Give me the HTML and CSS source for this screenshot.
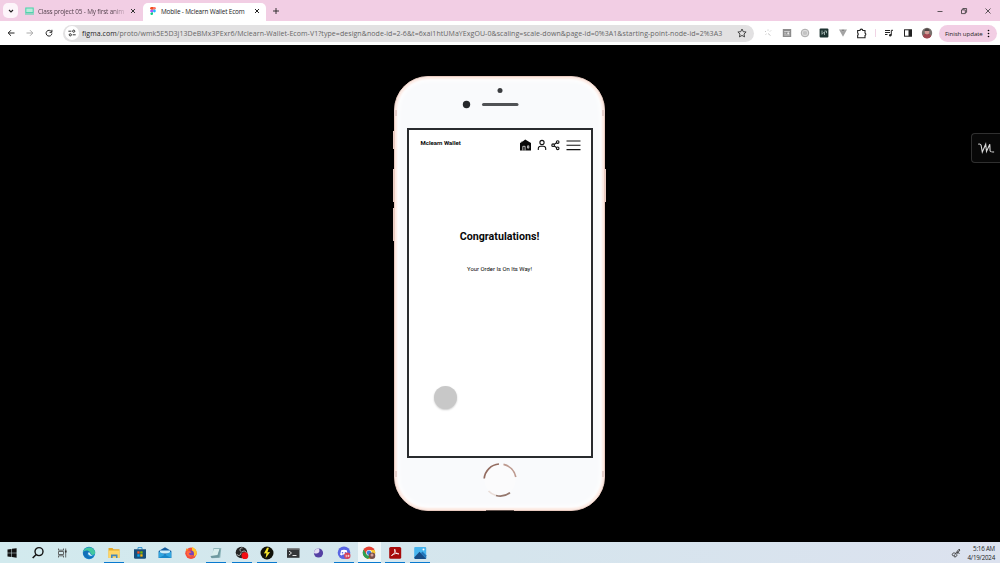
FILE: index.html
```
<!DOCTYPE html>
<html lang="en">
<head>
    <meta charset="UTF-8">
    <meta name="viewport" content="width=device-width, initial-scale=1.0">
    <title>Mobile - Mclearn Wallet Ecom</title>
    <link rel="stylesheet" href="styles.css">
</head>
<body>
    <div class="tabs">
        <div class="tab-search">
            <svg width="6" height="6" viewBox="0 0 6 6"><path d="M1 2l2 2 2-2" fill="none" stroke="#222" stroke-width="1.1"/></svg>
        </div>
        <div class="tab tab-first">
            <svg width="9" height="8" viewBox="0 0 9 8"><rect x=".8" y="1" width="7.4" height="4.6" fill="#b9eadb" stroke="#45d3a8" stroke-width="1"/><path d="M0 7h9" stroke="#45d3a8"/></svg>
            <span class="tab-title">Class project 05 - My first anim</span>
            <svg class="close" width="6" height="6" viewBox="0 0 6 6"><path d="M1 1l4 4M5 1L1 5" stroke="#333"/></svg>
        </div>
        <div class="tab tab-active">
            <svg width="6" height="8" viewBox="0 0 6 8">
                <path d="M3 0H1.5a1.35 1.35 0 0 0 0 2.7H3z" fill="#f24e1e"/>
                <path d="M3 0h1.5a1.35 1.35 0 0 1 0 2.7H3z" fill="#ff7262"/>
                <path d="M3 2.7H1.5a1.35 1.35 0 0 0 0 2.7H3z" fill="#a259ff"/>
                <circle cx="4.4" cy="4" r="1.4" fill="#1abcfe"/>
                <path d="M3 5.4H1.5A1.3 1.3 0 1 0 3 6.7z" fill="#0acf83"/>
            </svg>
            <span class="tab-title">Mobile - Mclearn Wallet Ecom</span>
            <svg class="close" width="6" height="6" viewBox="0 0 6 6"><path d="M1 1l4 4M5 1L1 5" stroke="#222"/></svg>
        </div>
        <svg class="new-tab" width="6" height="6" viewBox="0 0 6 6"><path d="M3 0v6M0 3h6" stroke="#222" stroke-width=".9"/></svg>
        <div class="window-buttons">
            <svg width="8" height="8" viewBox="0 0 8 8"><path d="M1.5 4.5h5" stroke="#333" stroke-width=".8"/></svg>
            <svg width="8" height="8" viewBox="0 0 8 8"><path d="M1.5 2.9h3.8v3.7H1.5zM2.8 2.9V1.5h3.8v3.8H5.3" fill="none" stroke="#333" stroke-width=".8"/></svg>
            <svg width="8" height="8" viewBox="0 0 8 8"><path d="M1.5 1.5l5 5M6.5 1.5l-5 5" stroke="#333" stroke-width=".8"/></svg>
        </div>
    </div>

    <div class="toolbar">
        <div class="nav">
            <svg width="8" height="8" viewBox="0 0 8 8"><path d="M7.5 4H1.2M4 1.2L1.2 4 4 6.8" fill="none" stroke="#222"/></svg>
            <svg width="8" height="8" viewBox="0 0 8 8"><path d="M.5 4h6.3M4 1.2L6.8 4 4 6.8" fill="none" stroke="#aaa"/></svg>
            <svg width="8" height="8" viewBox="0 0 8 8"><path d="M6.5 2.7A2.9 2.9 0 1 0 6.9 4.5M6.9.8v2.5H4.5" fill="none" stroke="#222"/></svg>
        </div>
        <div class="address">
            <div class="site-info">
                <svg width="8" height="8" viewBox="0 0 8 8"><path d="M.4 2.2h3M4.7 5.8h3" stroke="#333"/><circle cx="5.7" cy="2.2" r="1.1" fill="none" stroke="#333"/><circle cx="2.3" cy="5.8" r="1.1" fill="none" stroke="#333"/></svg>
            </div>
            <div class="url"><b>figma.com</b>/proto/wmk5E5D3j13DeBMx3PExr6/Mclearn-Wallet-Ecom-V1?type=design&amp;node-id=2-6&amp;t=6xai1htUMaYExgOU-0&amp;scaling=scale-down&amp;page-id=0%3A1&amp;starting-point-node-id=2%3A3</div>
            <svg class="star" width="10" height="10" viewBox="0 0 9 9"><path d="M4.5.9l1.1 2.4 2.6.3-1.9 1.800.5 2.600-2.300-1.300L2.200 8l.5-2.600L.8 3.600l2.600-.3z" fill="none" stroke="#333" stroke-width=".8"/></svg>
        </div>
        <div class="extensions">
            <svg width="10" height="10" viewBox="0 0 10 10"><path d="M2 3l1 1M5 1.5v1.2M8 2.5l-1 1M2.5 6.5l1-.6M5 5.5l2.500 2" stroke="#c8c8c8" stroke-width="1"/></svg>
            <svg width="10" height="10" viewBox="0 0 10 10"><rect x=".8" y="1" width="8.4" height="8" fill="#8c8c8c"/><path d="M2.2 3.5h5.6M2.2 5.2h2M2.2 7h5.6" stroke="#ddd" stroke-width=".8"/><circle cx="6.3" cy="5.3" r="1.1" fill="#eee"/></svg>
            <svg width="10" height="10" viewBox="0 0 10 10"><circle cx="5" cy="5" r="3.800" fill="#ddd" stroke="#aaa" stroke-width="1"/><path d="M3.8 3.5v3M5 3v4M6.2 3.500v3" stroke="#aaa" stroke-width=".7"/></svg>
            <svg width="10" height="10" viewBox="0 0 10 10"><rect x=".6" y=".6" width="8.8" height="8.8" rx="1" fill="#1d3431"/><path d="M3 2.500v3.800l2.500-2.500V7M5.500 3h2v2.200" stroke="#b7c9c4" fill="none" stroke-width=".8"/></svg>
            <svg width="10" height="10" viewBox="0 0 10 10"><path d="M1 1.5h2.400L5 4l1.600-2.500H9L5 8.800z" fill="#a3a3a3"/><path d="M3.4 1.500L5 4l1.600-2.500" fill="#777"/></svg>
            <svg width="11" height="11" viewBox="0 0 10 10"><path d="M1.5 2.300h2.100a1.300 1.300 0 0 1 2.600 0h2v2.300a1.200 1.200 0 0 1 0 2.200v2H1.500V6.600a1.200 1.200 0 0 0 0-2z" fill="none" stroke="#222" stroke-width="1"/></svg>
            <span class="divider"></span>
            <svg width="10" height="10" viewBox="0 0 10 10"><path d="M1 2.500h5M1 4.500h5M1 6.500h2.500M7.300 7.300v-5H9" fill="none" stroke="#222"/><circle cx="6.2" cy="7.3" r="1.2" fill="#222"/></svg>
            <svg width="10" height="10" viewBox="0 0 10 10"><rect x="1.500" y="1.8" width="7" height="6.4" fill="none" stroke="#222"/><path d="M5.5 1.800h3v6.400h-3z" fill="#222"/></svg>
            <svg width="12" height="12" viewBox="0 0 12 12"><circle cx="6" cy="6" r="5.2" fill="#77716d"/><path d="M2 9.500a4 3 0 0 1 8 0 5.200 5.200 0 0 1-8 0z" fill="#a04750"/><circle cx="6" cy="5" r="2.4" fill="#d29a93"/><path d="M3.5 4a2.500 2.500 0 0 1 5 0z" fill="#4d4545"/></svg>
        </div>
        <div class="update">
            <span>Finish update</span>
            <svg width="3" height="9" viewBox="0 0 3 9"><circle cx="1.5" cy="1.5" r=".8"/><circle cx="1.5" cy="4.5" r=".8"/><circle cx="1.5" cy="7.5" r=".8"/></svg>
        </div>
    </div>

    <div class="stage">
        <div class="phone">
            <i class="side side-mute"></i>
            <i class="side side-up"></i>
            <i class="side side-down"></i>
            <i class="side side-power"></i>
            <i class="band band-tl"></i>
            <i class="band band-tr"></i>
            <i class="band band-bl"></i>
            <i class="band band-br"></i>
            <i class="port"></i>
            <div class="phone-top">
                <svg width="60" height="24" viewBox="0 0 60 24"><circle cx="41" cy="4.5" r="2.5" fill="#3b3d40"/><circle cx="7.5" cy="18.5" r="3.7" fill="#26282b"/><rect x="23" y="17" width="36.5" height="3" rx="1.5" fill="#505255"/></svg>
            </div>
            <div class="screen">
                <div class="app-bar">
                    <div class="brand">Mclearn Wallet</div>
                    <div class="app-icons">
                        <svg width="11" height="12" viewBox="0 0 11 12"><path d="M0 11.500V4L1.500 3.300V2.500h1.200L5.200.5 11 4v7.500z" fill="#080808"/><path d="M2.800 11.500V7.300h2.300v4.200M7.600 6.800h1.200v2.300H7.600z" fill="none" stroke="#fff" stroke-width=".7"/></svg>
                        <svg width="10" height="12" viewBox="0 0 10 12"><circle cx="5" cy="3.5" r="2.100" fill="none" stroke="#111" stroke-width="1.1"/><path d="M1.300 11V9.500A2.300 2.300 0 0 1 3.600 7.300h2.800a2.300 2.300 0 0 1 2.300 2.200V11" fill="none" stroke="#111" stroke-width="1.1"/></svg>
                        <svg width="9" height="12" viewBox="0 0 9 12"><path d="M6.500 3L2.100 6.200l4.400 3.100" fill="none" stroke="#111" stroke-width="1.1"/><circle cx="6.7" cy="3.1" r="1.3" fill="#fff" stroke="#111" stroke-width="1.1"/><circle cx="2.1" cy="6.2" r="1.3" fill="#fff" stroke="#111" stroke-width="1.1"/><circle cx="6.7" cy="9.3" r="1.3" fill="#fff" stroke="#111" stroke-width="1.1"/></svg>
                        <svg width="15" height="12" viewBox="0 0 15 12"><path d="M.5 2h14M.5 6.300h14M.5 10.600h14" stroke="#111" stroke-width="1.1"/></svg>
                    </div>
                </div>
                <h1>Congratulations!</h1>
                <p>Your Order Is On Its Way!</p>
                <i class="cursor"></i>
            </div>
            <svg class="home" width="36" height="36" viewBox="0 0 36 36">
                <circle cx="18" cy="18" r="15.5" fill="#fbfbfc"/>
                <g fill="none" stroke-width="1.7">
                    <path d="M2.200 16.500A16 16 0 0 1 17 2" stroke="#936c60"/>
                    <path d="M21.500 2.400A16 16 0 0 1 33.800 15" stroke="#bd9a8f"/>
                    <path d="M28 30.600A16 16 0 0 1 14 33.500" stroke="#94776d"/>
                    <path d="M14 33.500a16 16 0 0 1-7.500-4.500" stroke="#eaded9"/>
                </g>
            </svg>
        </div>
        <div class="side-tab">
            <svg width="18" height="12" viewBox="0 0 18 12"><path d="M1.200 2.200c1-.4 2.300-.2 2.900 1L5.300 10 8.700 2.200 9.500 9.500l3.300-7.300.3 6.800c.2 1.200 2 1 4 .9" fill="none" stroke="#d8d8d8" stroke-width="1.1"/></svg>
        </div>
    </div>

    <div class="taskbar">
        <div class="task"><svg width="14" height="14" viewBox="0 0 14 14"><path d="M2.500 3.500l4-.6v3.800h-4zM7 2.800l4.600-.6v4.500H7zM2.500 7.300h4V11l-4-.6zM7 7.300h4.600v4.400L7 11.100z" fill="#111"/></svg></div>
        <div class="task"><svg width="14" height="14" viewBox="0 0 14 14"><circle cx="8" cy="5.6" r="4" fill="none" stroke="#151515" stroke-width="1.4"/><path d="M5.200 8.500L1.700 12" stroke="#151515" stroke-width="1.6"/></svg></div>
        <div class="task"><svg width="14" height="14" viewBox="0 0 14 14"><path d="M2.500 2.500v1.700h5V2.500M2.500 5.500h5v3h-5zM2.500 11.500V9.800h5v1.700M9.700 2.500v9" fill="none" stroke="#444" stroke-width=".8"/><path d="M8.900 4.500h1.700v2H8.900z" fill="#333"/></svg></div>
        <div class="task"><svg width="14" height="14" viewBox="0 0 14 14"><circle cx="7" cy="7" r="6.2" fill="#1682cb"/><path d="M1 7a6.200 6.200 0 0 1 12.200-.8c.2 2-1.600 3-3.800 2.600C9 5 3 3.500 1 7z" fill="#43c7a0"/><path d="M1 7c1.500-3 5-3.200 7-.8-2-.5-3.500 1.300-2.500 3.300 1 1.800 3.700 2 6 .9A6.200 6.200 0 0 1 1 7z" fill="#146fb8"/><path d="M7 6.300c-1.300.4-1.200 2 .3 3 1.500 1 3.300.6 4.500.3C8 10 9 7.500 7 6.300z" fill="#e1f3f8"/></svg></div>
        <div class="task open"><svg width="14" height="14" viewBox="0 0 14 14"><path d="M1.500 2h4l1 1.200h6V12h-11z" fill="#e5a928"/><path d="M1.500 4.500h11V12h-11z" fill="#ffd667"/><path d="M4 12V8.500h6.500V12H9v-1.700H5.600V12z" fill="#4587be"/></svg></div>
        <div class="task"><svg width="14" height="14" viewBox="0 0 14 14"><path d="M5 3.500V1.600h4v1.900" fill="none" stroke="#3096d2"/><path d="M1 3.300h12v8.200a1.300 1.300 0 0 1-1.300 1.300H2.300A1.300 1.300 0 0 1 1 11.500z" fill="#174e7b"/><path d="M4.300 5.300h2.300v2.300H4.300z" fill="#f25022"/><path d="M7.300 5.300h2.300v2.300H7.300z" fill="#7fba00"/><path d="M4.300 8.300h2.300v2.300H4.300z" fill="#00a4ef"/><path d="M7.300 8.300h2.300v2.300H7.300z" fill="#ffb900"/></svg></div>
        <div class="task"><svg width="14" height="14" viewBox="0 0 14 14"><path d="M.7 5L7 1.200 13.300 5v7H.7z" fill="#145f9f"/><path d="M2 4.500h10v3H2z" fill="#cceefa"/><path d="M.7 5.400L7 8.700l6.300-3.300V12H.7z" fill="#31a5df"/><path d="M.7 12L7 8.700l6.300 3.300z" fill="#1787c9"/></svg></div>
        <div class="task"><svg width="14" height="14" viewBox="0 0 14 14"><circle cx="7" cy="7.3" r="5.7" fill="#f44c3b"/><path d="M8 1c3.500 1 5.400 4.300 4.700 7.500L9.500 11C11 8 9 6 8 4.500z" fill="#ffc42d"/><path d="M1.800 5l.7-2.700L5 4z" fill="#ff8a24"/><circle cx="7" cy="7.5" r="2.9" fill="#7544ba"/><path d="M2.500 5.500C5 4.500 7 5 7.500 6.500L5 7.300c0 2 2.500 2.500 4.400 1.500-1 2.700-5 2.600-6.500 0z" fill="#ff6842"/></svg></div>
        <div class="task open"><svg width="14" height="14" viewBox="0 0 14 14"><path d="M4.500 2h7.800l-1 9.700-8.500.5z" fill="#91b8bd"/><path d="M5 3h5.700l-2 6.500-6.800 1z" fill="#d9eeed"/><path d="M1.500 10l7-1 2-6 1 .5-1.300 8-7.800.5z" fill="#6f9aa0"/></svg></div>
        <div class="task open"><svg width="14" height="14" viewBox="0 0 14 14"><circle cx="6.5" cy="6.5" r="5.8" fill="#252525"/><path d="M6.500 6c-3-2-1-4.500 1-4M6 6.700c0 3-3 3.600-4.200 1.500M7 6c2.400-2 4.400-.5 4.300 1.500" fill="none" stroke="#c8c8c8" stroke-width=".9"/><circle cx="9.9" cy="9.7" r="3.4" fill="#f20d12"/></svg></div>
        <div class="task open"><svg width="14" height="14" viewBox="0 0 14 14"><circle cx="7" cy="7" r="6.5" fill="#101109"/><path d="M7 1.800L3.900 7.600l2.500-.3-.8 4.900 4.500-6.200-2.700.2 1.500-4.400z" fill="#f6e52c"/></svg></div>
        <div class="task"><svg width="14" height="14" viewBox="0 0 14 14"><path d="M1 2.500h12.500v9.300H1z" fill="#333638"/><path d="M1 2.500h12.500v1.200H1z" fill="#777"/><path d="M3 5l2.500 2L3 9M6.500 9.500h4" fill="none" stroke="#e5e5e5"/></svg></div>
        <div class="task"><svg width="14" height="14" viewBox="0 0 14 14"><circle cx="7.5" cy="7" r="4.6" fill="#5541a4"/><path d="M3 7a4.500 4.500 0 0 1 4.700-4.600C9 4 8.700 6.500 6.500 7.300 5 7.800 3.700 7.600 3 7z" fill="#e4ddf4"/></svg></div>
        <div class="task open"><svg width="14" height="14" viewBox="0 0 14 14"><circle cx="7" cy="6.8" r="6.3" fill="#5966e4"/><path d="M4.200 4.200Q7 3.200 9.800 4.200l1 4.500-1.700.8-.7-1H5.600l-.8 1-1.700-.8z" fill="#fff"/><circle cx="5.5" cy="6.7" r=".8" fill="#5966e4"/><circle cx="8.5" cy="6.7" r=".8" fill="#5966e4"/><circle cx="10.3" cy="9.8" r="3.2" fill="#d64359"/><path d="M8.500 9.300h1.300v1.500H8.500M11.500 8.800v2.200M10.400 9.900h2.200" fill="none" stroke="#fff" stroke-width=".6"/></svg></div>
        <div class="task open current"><svg width="14" height="14" viewBox="0 0 14 14"><circle cx="7" cy="6.7" r="6.2" fill="#e54335"/><path d="M1.600 3.600a6.200 6.200 0 0 0 4.700 9.300l2.500-4.600H4.300z" fill="#2ca252"/><path d="M7 4h5.600a6.200 6.200 0 0 1-6.300 8.900L9.300 8z" fill="#f8c92f"/><circle cx="7" cy="6.7" r="2.8" fill="#fff"/><circle cx="7" cy="6.7" r="2.2" fill="#367ce4"/><circle cx="10" cy="9.8" r="3.3" fill="#77504d"/><circle cx="10" cy="9" r="1.5" fill="#d4a09a"/></svg></div>
        <div class="task open"><svg width="14" height="14" viewBox="0 0 14 14"><rect x="1.2" y="1" width="12" height="11.8" rx="1.5" fill="#a70b0b"/><path d="M3.500 9.500C6 8.500 8 5 6.800 3.200c-1 .3.700 5 4 4.700-.6-1.300-6 0-7.300 1.600z" fill="none" stroke="#fff" stroke-width=".9"/></svg></div>
        <div class="task open"><svg width="14" height="14" viewBox="0 0 14 14"><rect x="1.2" y="1" width="12" height="12" rx="1" fill="#47b5ef"/><path d="M1.200 11.500L6.500 5.800l6.700 6.900-.8.300H2z" fill="#174c86"/><path d="M7.800 7.200L9.500 5.500l3.700 3.800v3.300z" fill="#2374b8"/><circle cx="10.5" cy="3.5" r="1" fill="#fff"/></svg></div>
        <div class="tray">
            <svg width="10" height="10" viewBox="0 0 10 10"><path d="M4.500 5.500L8 1.200l1 .8-3.500 4.200zM4.700 5.800c-1.500-1.800-3.800-.5-3.400 1.200.4 1.500 2.700 1 2.600-.6M3 8.700c1.500.6 3-.2 3-2M6 4l2.500 1.500" fill="none" stroke="#333" stroke-width=".9"/></svg>
            <div class="clock">5:16 AM<br>4/19/2024</div>
        </div>
    </div>
</body>
</html>
```

FILE: styles.css
```
* {
    box-sizing: border-box;
}

body {
    display: flex;
    flex-direction: column;
    height: 563px;
    margin: 0;
    overflow: hidden;
    background-color: #000;
    font-family: "Open Sans", "Noto Sans", sans-serif;
    color: #222;
}

svg {
    display: block;
    flex: none;
}

/* browser */
.tabs {
    display: flex;
    align-items: center;
    height: 21px;
    padding-left: 3px;
    background-color: #f2cee4;
}

.tab-search {
    display: flex;
    align-items: center;
    justify-content: center;
    width: 15px;
    height: 15px;
    border-radius: 5px;
    background-color: #fdf5fa;
}

.tab {
    display: flex;
    align-items: center;
    height: 18px;
    margin-top: 3px;
    padding-bottom: 2px;
    font-size: 6.4px;
    letter-spacing: -.16px;
}

.tab-first {
    width: 125px;
    padding-left: 7px;
    color: #55434f;
}

.tab-active {
    width: 123px;
    padding-left: 7px;
    border-radius: 5px 5px 0 0;
    background-color: #fff;
}

.tab-title {
    width: 86px;
    margin-left: 5px;
    white-space: nowrap;
}

.tab-first .tab-title {
    margin-left: 4px;
    -webkit-mask-image: linear-gradient(90deg, #000 85%, rgba(0, 0, 0, .3));
    mask-image: linear-gradient(90deg, #000 85%, rgba(0, 0, 0, .3));
}

.close {
    margin-left: 7px;
}

.tab-first .close {
    margin-left: 6px;
}

.new-tab {
    margin-left: 7px;
}

.window-buttons {
    display: flex;
    gap: 16px;
    margin-left: auto;
    padding-right: 8px;
}

.toolbar {
    display: flex;
    align-items: center;
    height: 24px;
    background-color: #fff;
}

.nav {
    display: flex;
    gap: 11px;
    width: 63px;
    padding-left: 7px;
}

.address {
    display: flex;
    align-items: center;
    width: 691px;
    height: 17px;
    border-radius: 9px;
    background-color: #e2e1e2;
}

.site-info {
    display: flex;
    align-items: center;
    justify-content: center;
    width: 14px;
    height: 14px;
    margin-left: 1.5px;
    border-radius: 50%;
    background-color: #fff;
}

.url {
    width: 651px;
    margin-left: 3.5px;
    white-space: nowrap;
    font-size: 7px;
    letter-spacing: .07px;
    color: #666;
}

.url b {
    font-weight: 400;
    color: #222;
}

.star {
    margin-left: 4px;
}

.extensions {
    display: flex;
    align-items: center;
    gap: 8.7px;
    width: 185px;
    padding-left: 9px;
}

.divider {
    width: 1px;
    height: 8px;
    margin: 0 -1px;
    background-color: #f0d5e5;
}

.update {
    display: flex;
    align-items: center;
    justify-content: space-between;
    width: 58px;
    height: 17px;
    padding: 0 7px 0 6px;
    border-radius: 9px;
    background-color: #f2cee4;
    font-size: 6.1px;
    letter-spacing: -.05px;
    white-space: nowrap;
}

/* prototype */
.stage {
    position: relative;
    display: flex;
    justify-content: center;
    height: 497px;
    padding: 31px 1px 0 0;
    background-color: #000;
}

.phone {
    position: relative;
    display: flex;
    flex-direction: column;
    align-items: center;
    width: 211px;
    height: 435px;
    border: 1px solid #e9cbc1;
    border-radius: 34px;
    background-color: #f9fafc;
    box-shadow: inset 0 0 2px 2px #fce9e2, inset 0 0 5px 4px #fff;
}

.phone-top {
    width: 211px;
    height: 51px;
    padding: 9px 0 0 65px;
}

.screen {
    position: relative;
    width: 186px;
    height: 330px;
    border: 2px solid #292b2e;
    background-color: #fff;
    font-family: Roboto, sans-serif;
    text-align: center;
    color: #080808;
}

.app-bar {
    display: flex;
    justify-content: space-between;
    height: 30px;
    padding: 9px 10px 0 12px;
}

.brand {
    margin-top: -1px;
    font-size: 6px;
    font-weight: 700;
    line-height: 9px;
}

.app-icons {
    display: flex;
    gap: 6px;
}

.app-icons svg:nth-child(2) {
    margin-right: -2px;
}

h1 {
    margin: 69px 0 0;
    font-size: 10.7px;
    font-weight: 700;
    line-height: 16px;
}

p {
    margin: 19px 0 0;
    font-size: 5.9px;
    line-height: 10px;
}

.cursor {
    position: absolute;
    left: 25px;
    top: 256px;
    width: 23px;
    height: 23px;
    border-radius: 50%;
    background-color: #c8c8c8;
    box-shadow: 0 1px 2px #ccc;
}

.home {
    margin-top: 4px;
}

.side {
    position: absolute;
    left: -2px;
    width: 1px;
    background-color: #e9cdc4;
}

.side-mute {
    top: 54px;
    height: 18px;
}

.side-up {
    top: 92px;
    height: 33px;
}

.side-down {
    top: 131px;
    height: 33px;
}

.side-power {
    left: auto;
    right: -2px;
    top: 92px;
    height: 33px;
}

.band {
    position: absolute;
    width: 3px;
    height: 6px;
    background-color: #e6cfca;
}

.band-tl,
.band-tr {
    top: 33px;
}

.band-bl,
.band-br {
    bottom: 33px;
}

.band-tl,
.band-bl {
    left: -1px;
}

.band-tr,
.band-br {
    right: -1px;
}

.port {
    position: absolute;
    left: 91px;
    bottom: -1px;
    width: 28px;
    height: 1px;
    background-color: #62534e;
}

.side-tab {
    position: absolute;
    right: 0;
    top: 88px;
    display: flex;
    align-items: center;
    justify-content: center;
    width: 29px;
    height: 30px;
    border: 1px solid #303030;
    border-right: 0;
    border-radius: 4px 0 0 4px;
    background-color: #080808;
}

/* taskbar */
.taskbar {
    display: flex;
    height: 21px;
    background: linear-gradient(90deg, #d2eaee, #d5e5ed 50%, #dce2ef);
}

.task {
    display: flex;
    flex: none;
    align-items: center;
    justify-content: center;
    width: 25.5px;
}

.task:first-child {
    width: 24.75px;
    padding-right: .75px;
}

.open {
    background: linear-gradient(#0879cf, #0879cf) center bottom / 20px 1px no-repeat;
}

.current {
    background: linear-gradient(#0879cf, #0879cf) center bottom / 23px 1px no-repeat, linear-gradient(#eff7f9, #eff7f9) center / 23px 21px no-repeat;
}

.tray {
    display: flex;
    align-items: center;
    gap: 6px;
    margin-left: auto;
    padding-right: 5px;
}

.clock {
    font-size: 6.2px;
    letter-spacing: -.2px;
    line-height: 9px;
    text-align: right;
}
```
